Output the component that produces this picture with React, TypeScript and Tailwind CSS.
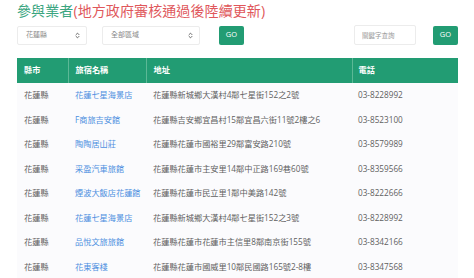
import { ChevronsUpDown } from 'lucide-react'

const ROWS = [
  { city: '花蓮縣', name: '花蓮七星海景店', addr: '花蓮縣新城鄉大漢村4鄰七星街152之2號', tel: '03-8228992' },
  { city: '花蓮縣', name: 'F商旅吉安館', addr: '花蓮縣吉安鄉宜昌村15鄰宜昌六街11號2樓之6', tel: '03-8523100' },
  { city: '花蓮縣', name: '陶陶居山莊', addr: '花蓮縣花蓮市國裕里29鄰富安路210號', tel: '03-8579989' },
  { city: '花蓮縣', name: '采盈汽車旅館', addr: '花蓮縣花蓮市主安里14鄰中正路169巷60號', tel: '03-8359566' },
  { city: '花蓮縣', name: '煙波大飯店花蓮館', addr: '花蓮縣花蓮市民立里1鄰中美路142號', tel: '03-8222666' },
  { city: '花蓮縣', name: '花蓮七星海景店', addr: '花蓮縣新城鄉大漢村4鄰七星街152之3號', tel: '03-8228992' },
  { city: '花蓮縣', name: '品悅文旅旅館', addr: '花蓮縣花蓮市花蓮市主信里8鄰南京街155號', tel: '03-8342166' },
  { city: '花蓮縣', name: '花東客棧', addr: '花蓮縣花蓮市國威里10鄰民國路165號2-8樓', tel: '03-8347568' },
]

function Select({ label, width }: { label: string; width: string }) {
  return (
    <div className={`${width} h-[19px] flex items-center justify-between pl-[8px] pr-[5px] border border-[#ececec] rounded-[2px] bg-white text-[7px] text-[#888]`}>
      <span>{label}</span>
      <ChevronsUpDown size={7} strokeWidth={3} className="text-[#555]" />
    </div>
  )
}

function GoButton() {
  return (
    <button className="w-[25px] h-[19px] rounded-[2px] bg-[#229c73] text-white text-[7.5px] leading-none flex items-center justify-center">
      GO
    </button>
  )
}

export default function App() {
  return (
    <div className="w-[474px] h-[278px] overflow-hidden bg-white text-[#555]" style={{ fontFamily: '"Open Sans", "Noto Sans CJK TC", sans-serif' }}>
      <div className="pl-[17px] pr-[16px]">
        <h1 className="pt-[1px] text-[14px] leading-[19px] font-normal tracking-[0.1px]">
          <span className="text-[#3aa57f]">參與業者</span>
          <span className="text-[#e0575b]">(地方政府審核通過後陸續更新)</span>
        </h1>

        <div className="mt-[5px] flex items-center">
          <Select label="花蓮縣" width="w-[70px]" />
          <div className="w-[15px]" />
          <Select label="全部區域" width="w-[98px]" />
          <div className="w-[19px]" />
          <GoButton />
          <div className="flex-1" />
          <input
            placeholder="關鍵字查詢"
            className="w-[62px] h-[20px] px-[7px] border border-[#ececec] rounded-[2px] text-[6.5px] placeholder:text-[#999] outline-none"
          />
          <div className="w-[17px]" />
          <GoButton />
        </div>

        <table className="mt-[13px] w-[441px] border-collapse text-[8.2px] table-fixed">
          <colgroup>
            <col className="w-[51px]" />
            <col className="w-[78px]" />
            <col className="w-[206px]" />
            <col className="w-[106px]" />
          </colgroup>
          <thead>
            <tr className="bg-[#229c73] text-white h-[25px]">
              <th className="text-left font-bold pl-[7px] border-r border-[#5cb896]">縣市</th>
              <th className="text-left font-bold pl-[7px] border-r border-[#5cb896]">旅宿名稱</th>
              <th className="text-left font-bold pl-[7px] border-r border-[#5cb896]">地址</th>
              <th className="text-left font-bold pl-[6px]">電話</th>
            </tr>
          </thead>
          <tbody>
            {ROWS.map((r, i) => (
              <tr key={i} className="h-[24.5px] bg-[#fbfbfd] text-[#5f5f5f]">
                <td className="pl-[7px] whitespace-nowrap">{r.city}</td>
                <td className="pl-[7px] whitespace-nowrap text-[#4d8fe0]">{r.name}</td>
                <td className="pl-[7px] whitespace-nowrap">{r.addr}</td>
                <td className="pl-[6px] whitespace-nowrap">{r.tel}</td>
              </tr>
            ))}
          </tbody>
        </table>
      </div>
    </div>
  )
}
